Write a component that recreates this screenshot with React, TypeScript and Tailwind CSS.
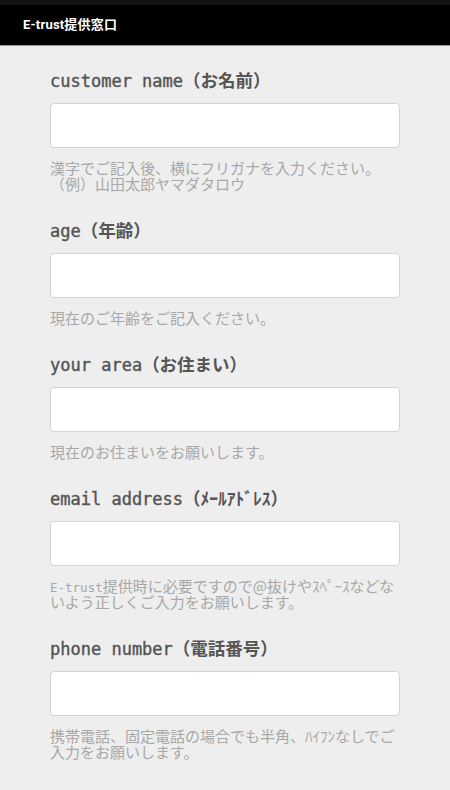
const fields = [
  {
    label: "customer name",
    jp: "（お名前）",
    help: ["漢字でご記入後、横にフリガナを入力ください。", "（例）山田太郎ヤマダタロウ"],
  },
  { label: "age", jp: "（年齢）", help: ["現在のご年齢をご記入ください。"] },
  { label: "your area", jp: "（お住まい）", help: ["現在のお住まいをお願いします。"] },
  {
    label: "email address",
    jp: "（ﾒｰﾙｱﾄﾞﾚｽ）",
    help: ["提供時に必要ですので@抜けやｽﾍﾟｰｽなどな", "いよう正しくご入力をお願いします。"],
    lead: "E-trust",
  },
  {
    label: "phone number",
    jp: "（電話番号）",
    help: ["携帯電話、固定電話の場合でも半角、ﾊｲﾌﾝなしでご", "入力をお願いします。"],
  },
];

const App = () => {
  return (
    <div className="min-h-[790px] bg-[#eeeeee] font-['Noto_Sans_CJK_JP',sans-serif] [text-spacing-trim:space-all]">
      <div className="h-[5px] bg-[#141414]" />
      <div className="h-[41px] bg-black border-b border-[#9a9a9a] flex items-center pl-[23px]">
        <span className="text-white text-[13px] font-bold tracking-[0.2px] font-['Roboto','Noto_Sans_CJK_JP',sans-serif]">
          E-trust提供窓口
        </span>
      </div>

      <form className="w-[350px] mx-auto pt-[24px]">
        {fields.map((f, i) => (
          <div key={i} className="mb-[28px]">
            <label className="block h-[20px] leading-[20px] text-[17px] text-[#555555] whitespace-nowrap overflow-visible font-['DejaVu_Sans_Mono','Noto_Sans_CJK_JP',monospace]">
              <span className="[-webkit-text-stroke:0.4px_#555555]">{f.label}</span>
              <span className="text-[17.5px] font-bold font-['Noto_Sans_CJK_JP',sans-serif]">{f.jp}</span>
            </label>
            <input
              type="text"
              className="block mt-[13px] w-full h-[45px] bg-white border border-[#d4d4d4] rounded-[4px] outline-none px-2"
            />
            <p className="mt-[12px] text-[15px] leading-[16px] text-[#a8a8a8] whitespace-nowrap">
              {f.help.map((line, j) => (
                <span key={j} className="block h-[16px]">
                  {j === 0 && f.lead && (
                    <span className="text-[12.5px] leading-[16px] font-['DejaVu_Sans_Mono',monospace]">{f.lead}</span>
                  )}
                  {line}
                </span>
              ))}
            </p>
          </div>
        ))}
      </form>
    </div>
  );
};

export default App;
